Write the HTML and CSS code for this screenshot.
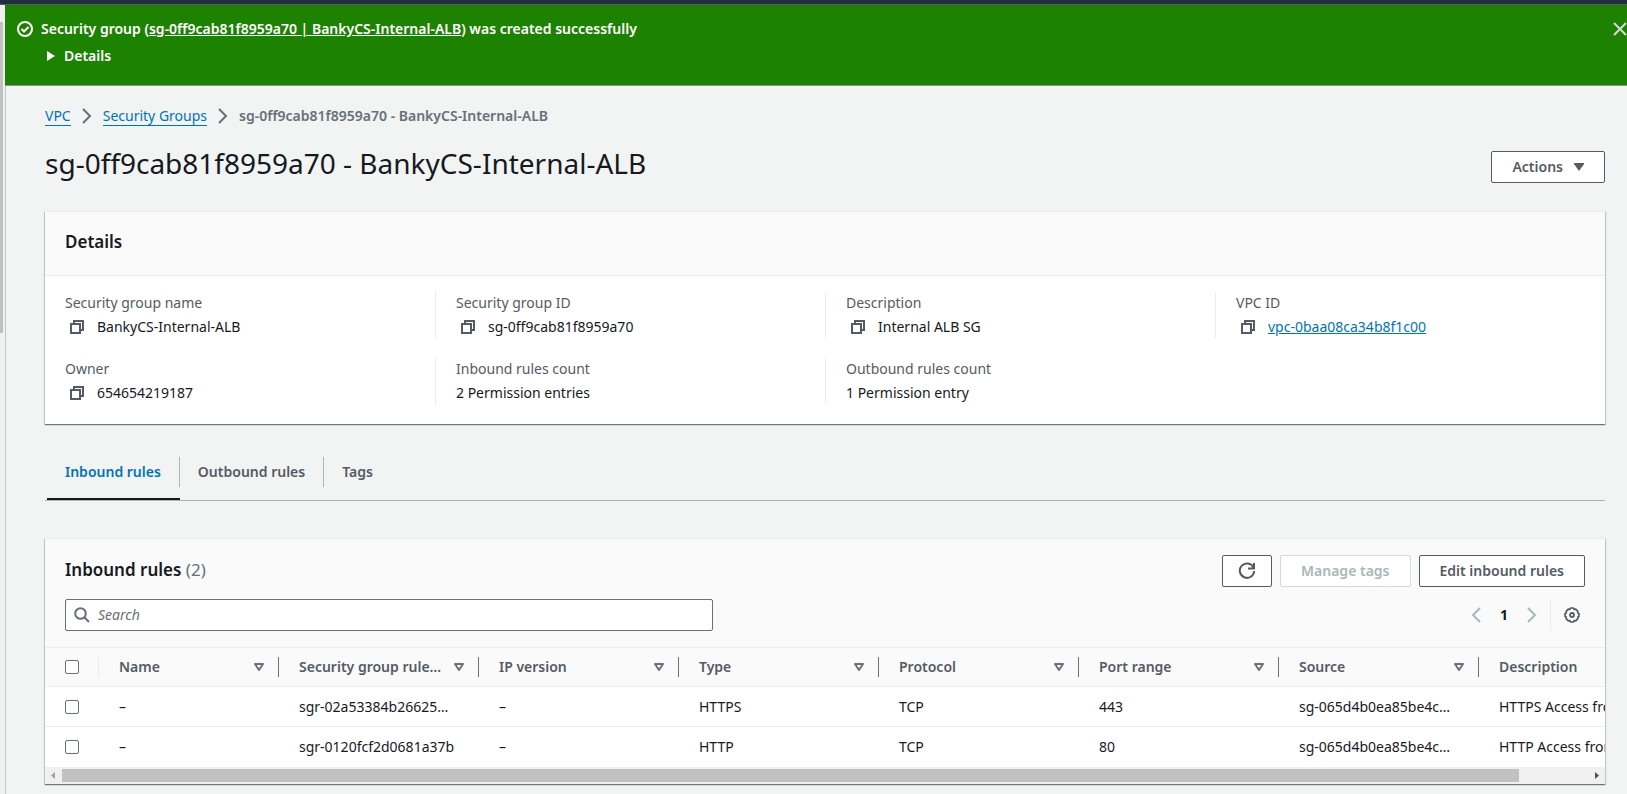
FILE: index.html
```html
<!DOCTYPE html>
<html lang="en">
<head>
<meta charset="utf-8">
<title>Security group details</title>
<link rel="stylesheet" href="styles.css">
</head>
<body>
<svg class="sprite" width="0" height="0" aria-hidden="true">
  <symbol id="copy" viewBox="0 0 16 16"><path d="M2 5h9v9H2zM5 5V2h9v9h-3" fill="none" stroke="currentColor" stroke-width="2"/></symbol>
  <symbol id="sort" viewBox="0 0 12 10"><path d="M2 2h8L6 8z" fill="none" stroke="currentColor" stroke-width="2" stroke-linejoin="round"/></symbol>
  <symbol id="right" viewBox="0 0 16 16"><path d="M4 1l7 7-7 7" fill="none" stroke="currentColor" stroke-width="2"/></symbol>
  <symbol id="left" viewBox="0 0 16 16"><path d="M12 1L5 8l7 7" fill="none" stroke="currentColor" stroke-width="2"/></symbol>
</svg>
<div class="topbar"></div>
<div class="shell">
  <div class="side"><div class="side-thumb"></div></div>
  <div class="page">
    <section class="flash">
      <svg class="flash-icon" width="16" height="16" viewBox="0 0 16 16" fill="none" stroke="currentColor" stroke-width="2"><circle cx="8" cy="8" r="7"/><path d="M4.500 8l2.500 2.500L11.500 6"/></svg>
      <div class="flash-text">
        <div>Security group (<a href="#">sg-0ff9cab81f8959a70 | BankyCS-Internal-ALB</a>) was created successfully</div>
        <button class="flash-more" type="button"><svg width="8" height="10" viewBox="0 0 8 10"><path d="M0 0l8 5-8 5z" fill="currentColor"/></svg>Details</button>
      </div>
      <button class="flash-close" type="button" aria-label="Dismiss"><svg width="16" height="16" viewBox="0 0 16 16"><path d="M2 2l12 12M14 2L2 14" stroke="currentColor" stroke-width="2"/></svg></button>
    </section>
    <main class="content">
      <nav class="crumbs" aria-label="Breadcrumb">
        <a href="#">VPC</a><svg width="16" height="16"><use href="#right"/></svg><a href="#">Security Groups</a><svg width="16" height="16"><use href="#right"/></svg><span>sg-0ff9cab81f8959a70 - BankyCS-Internal-ALB</span>
      </nav>
      <header class="title">
        <h1>sg-0ff9cab81f8959a70 - BankyCS-Internal-ALB</h1>
        <button class="btn" type="button">Actions<svg width="10" height="8" viewBox="0 0 10 8"><path d="M0 0h10v1L5 8 0 1z" fill="currentColor"/></svg></button>
      </header>

      <section class="card">
        <h2 class="card-head">Details</h2>
        <dl class="facts">
          <div><dt>Security group name</dt><dd><svg width="16" height="16"><use href="#copy"/></svg>BankyCS-Internal-ALB</dd></div>
          <div><dt>Security group ID</dt><dd><svg width="16" height="16"><use href="#copy"/></svg>sg-0ff9cab81f8959a70</dd></div>
          <div><dt>Description</dt><dd><svg width="16" height="16"><use href="#copy"/></svg>Internal ALB SG</dd></div>
          <div><dt>VPC ID</dt><dd><svg width="16" height="16"><use href="#copy"/></svg><a href="#">vpc-0baa08ca34b8f1c00</a></dd></div>
          <div><dt>Owner</dt><dd><svg width="16" height="16"><use href="#copy"/></svg>654654219187</dd></div>
          <div><dt>Inbound rules count</dt><dd>2 Permission entries</dd></div>
          <div><dt>Outbound rules count</dt><dd>1 Permission entry</dd></div>
        </dl>
      </section>

      <div class="tabs" role="tablist">
        <button class="tab active" role="tab" aria-selected="true"><span>Inbound rules</span></button>
        <button class="tab" role="tab"><span>Outbound rules</span></button>
        <button class="tab" role="tab"><span>Tags</span></button>
      </div>

      <section class="card">
        <div class="rules-head">
          <div class="rules-row">
            <h2>Inbound rules <span>(2)</span></h2>
            <div class="actions">
              <button class="btn icon" type="button" aria-label="Refresh"><svg width="18" height="18" viewBox="0 0 18 18" fill="none" stroke="currentColor" stroke-width="2"><path d="M15.500 5.500A7.200 7.200 0 1 0 16.200 9M16 1v5.500h-6"/></svg></button>
              <button class="btn" type="button" disabled>Manage tags</button>
              <button class="btn" type="button">Edit inbound rules</button>
            </div>
          </div>
          <div class="rules-row">
            <label class="search">
              <svg width="16" height="16" viewBox="0 0 16 16" fill="none" stroke="currentColor" stroke-width="2"><circle cx="6.500" cy="6.500" r="5.300"/><path d="M10.500 10.500L15 15"/></svg>
              <input type="search" placeholder="Search" aria-label="Search">
            </label>
            <div class="pager">
              <button type="button" aria-label="Previous page" disabled><svg width="16" height="16"><use href="#left"/></svg></button>
              <button type="button" class="current">1</button>
              <button type="button" aria-label="Next page" disabled><svg width="16" height="16"><use href="#right"/></svg></button>
              <button type="button" class="gear" aria-label="Preferences"><svg width="16" height="16" viewBox="0 0 16 16" fill="none" stroke="currentColor"><path stroke-width="1.700" stroke-linejoin="round" d="M6.700 1h2.600l.8 1.300 1.600-.2 2.200 2.200-.2 1.600 1.300.8v2.600l-1.300.8.2 1.600-2.200 2.200-1.600-.2-.8 1.300H6.700l-.8-1.300-1.600.2-2.200-2.200.2-1.600L1 9.300V6.700l1.300-.8-.2-1.600 2.200-2.200 1.600.2z"/><circle cx="8" cy="8" r="2" stroke-width="1.800"/></svg></button>
            </div>
          </div>
        </div>
        <div class="table-wrap">
          <table>
            <colgroup><col class="c-check"><col class="c-name"><col><col><col><col><col><col><col></colgroup>
            <thead>
              <tr>
                <th><input type="checkbox" aria-label="Select all"></th>
                <th><div class="th"><span>Name</span><svg width="12" height="10"><use href="#sort"/></svg></div></th>
                <th><div class="th"><span>Security group rule…</span><svg width="12" height="10"><use href="#sort"/></svg></div></th>
                <th><div class="th"><span>IP version</span><svg width="12" height="10"><use href="#sort"/></svg></div></th>
                <th><div class="th"><span>Type</span><svg width="12" height="10"><use href="#sort"/></svg></div></th>
                <th><div class="th"><span>Protocol</span><svg width="12" height="10"><use href="#sort"/></svg></div></th>
                <th><div class="th"><span>Port range</span><svg width="12" height="10"><use href="#sort"/></svg></div></th>
                <th><div class="th"><span>Source</span><svg width="12" height="10"><use href="#sort"/></svg></div></th>
                <th><div class="th"><span>Description</span></div></th>
              </tr>
            </thead>
            <tbody>
              <tr><td><input type="checkbox" aria-label="Select sgr-02a53384b26625"></td><td>–</td><td>sgr-02a53384b26625…</td><td>–</td><td>HTTPS</td><td>TCP</td><td>443</td><td>sg-065d4b0ea85be4c…</td><td>HTTPS Access from</td></tr>
              <tr><td><input type="checkbox" aria-label="Select sgr-0120fcf2d0681a37b"></td><td>–</td><td>sgr-0120fcf2d0681a37b</td><td>–</td><td>HTTP</td><td>TCP</td><td>80</td><td>sg-065d4b0ea85be4c…</td><td>HTTP Access from</td></tr>
            </tbody>
          </table>
        </div>
        <div class="hscroll">
          <svg width="17" height="17" viewBox="0 0 17 17"><path d="M10 5v7L6 8.500z" fill="#a3a3a3"/></svg>
          <div class="track"><div class="thumb"></div></div>
          <svg width="17" height="17" viewBox="0 0 17 17"><path d="M7 5v7l4-3.500z" fill="#505050"/></svg>
        </div>
      </section>
    </main>
  </div>
</div>
</body>
</html>
```
FILE: styles.css
```css
* { box-sizing: border-box; }
html, body { height: 100%; }
body {
  margin: 0;
  display: flex;
  flex-direction: column;
  overflow: hidden;
  background: #f2f3f3;
  color: #16191f;
  font: 14px/22px "Noto Sans", "Open Sans", sans-serif;
}
button, input { font: inherit; color: inherit; }
button { margin: 0; padding: 0; border: 0; background: none; }
svg { display: block; flex: none; }
a { color: #0073bb; }
h1, h2, dl, dd { margin: 0; }
.sprite { position: absolute; }

.topbar { flex: none; height: 5px; background: #232f3e; border-bottom: 1px solid #545b64; }
.shell { flex: 1; display: flex; min-height: 0; }
.side { flex: none; width: 5px; padding-top: 17px; background: #f0f0f0; }
.side-thumb { width: 3px; height: 311px; background: #c1c1c1; }
.page { flex: 1; min-width: 0; display: flex; flex-direction: column; }

.flash {
  flex: none;
  display: flex;
  height: 81px;
  padding: 13px 0 0 12px;
  background: #1d8102;
  border-bottom: 1px solid #8a9296;
  color: #fff;
  font-weight: 600;
}
.flash a { color: inherit; }
.flash-icon { margin: 3px 8px 0 0; }
.flash-text { flex: 1; }
.flash-more { display: flex; align-items: center; gap: 9px; margin: 5px 0 0 6px; font-weight: 600; }
.flash-close { align-self: flex-start; margin-top: 3px; color: #d5dbdb; margin-right: -1px; }

.content { flex: 1; padding: 19px 22px 0 39px; border-left: 1px solid #c4c8c9; }
.crumbs { display: flex; align-items: center; gap: 8px; color: #687078; font-weight: 600; }
.crumbs a { font-weight: 400; text-decoration: none; border-bottom: 1px solid #0073bb; line-height: 19px; }
.title { display: flex; justify-content: space-between; align-items: flex-start; padding: 18px 0 28px; }
.title h1 { font-size: 28px; line-height: 36px; font-weight: 400; }
.title .btn { margin-top: 6px; }

.btn {
  display: flex;
  align-items: center;
  justify-content: center;
  gap: 11px;
  height: 32px;
  padding: 0 20px;
  border: 1px solid #545b64;
  border-radius: 2px;
  background: #fff;
  color: #545b64;
  font-weight: 600;
}
.btn:disabled { border-color: #d5dbdb; color: #aab7b8; }
.btn.icon { padding: 0 15px; }

.card {
  background: #fff;
  border-top: 1px solid #eaeded;
  box-shadow: 0 1px 1px 0 rgba(0, 28, 36, 0.4), 1px 1px 1px 0 rgba(0, 28, 36, 0.15), -1px 1px 1px 0 rgba(0, 28, 36, 0.15);
}
.card h2 { font-size: 17px; line-height: 22px; font-weight: 600; }
.card h2 span { color: #687078; font-weight: 400; }
.card .card-head { padding: 19px 20px 22px; background: #fafafa; border-bottom: 1px solid #eaeded; }
.facts { display: grid; grid-template-columns: repeat(4, 1fr); row-gap: 20px; padding: 16px 0 20px; }
.facts > div { height: 46px; padding-left: 20px; border-left: 1px solid #eaeded; }
.facts > div:nth-child(4n+1) { border-left-color: transparent; padding-left: 19px; }
.facts dt { margin-bottom: 2px; color: #545b64; }
.facts dd { display: flex; align-items: center; }
.facts svg { margin: 0 12px 0 4px; color: #545b64; }

.tabs { display: flex; padding: 33px 0 0 2px; border-bottom: 1px solid #aab7b8; }
.tab { height: 43px; border-bottom: 2px solid transparent; color: #545b64; font-weight: 600; }
.tab span { display: block; margin-bottom: 11px; padding: 4px 18px; border-right: 1px solid #aab7b8; }
.tab:last-child span { border-right: 0; }
.tab.active { color: #0073bb; border-bottom-color: #16191f; }
.tabs + .card { margin-top: 37px; }

.rules-head { display: grid; gap: 12px; padding: 16px 20px; background: #fafafa; }
.rules-row { display: flex; justify-content: space-between; align-items: center; }
.rules-row h2 { padding-bottom: 2px; }
.actions { display: flex; gap: 8px; }
.search {
  display: flex;
  align-items: center;
  gap: 8px;
  width: 648px;
  height: 32px;
  padding-left: 8px;
  border: 1px solid #687078;
  border-radius: 2px;
  background: #fff;
  color: #687078;
}
.search input { flex: 1; min-width: 0; padding: 0; border: 0; outline: 0; background: none; }
.search input::placeholder { color: #687078; font-style: italic; opacity: 1; }
.pager { display: flex; align-items: center; height: 32px; }
.pager button { width: 28px; display: flex; justify-content: center; color: #aab7b8; }
.pager .current { color: #16191f; font-weight: 700; }
.pager .gear { align-items: center; width: 35px; height: 32px; margin-left: 4px; padding-left: 8px; border-left: 1px solid #eaeded; color: #545b64; }

.table-wrap { overflow: hidden; }
table { width: 1634px; table-layout: fixed; border-collapse: separate; border-spacing: 0; }
.c-check { width: 54px; }
.c-name { width: 180px; }
th, td { height: 40px; padding: 0 20px; text-align: left; white-space: nowrap; border-top: 1px solid #eaeded; }
th { height: 39px; padding: 0; background: #fafafa; color: #545b64; font-weight: 600; }
th:first-child { padding-left: 20px; background: linear-gradient(#eaeded, #eaeded) right center / 1px 20px no-repeat #fafafa; }
tbody tr:last-child td { height: 41px; }
.th { display: flex; align-items: center; justify-content: space-between; height: 20px; padding: 0 13px 0 20px; border-right: 1px solid #687078; }
.th svg { color: #687078; }
input[type="checkbox"] {
  appearance: none;
  display: block;
  width: 14px;
  height: 14px;
  margin: 0;
  border: 1px solid #687078;
  border-radius: 2px;
  background: #fff;
}
.hscroll { display: flex; height: 17px; background: #f0f0f0; }
.track { flex: 1; padding: 2px 0; }
.thumb { width: 95.5%; height: 13px; background: #c1c1c1; }
```
